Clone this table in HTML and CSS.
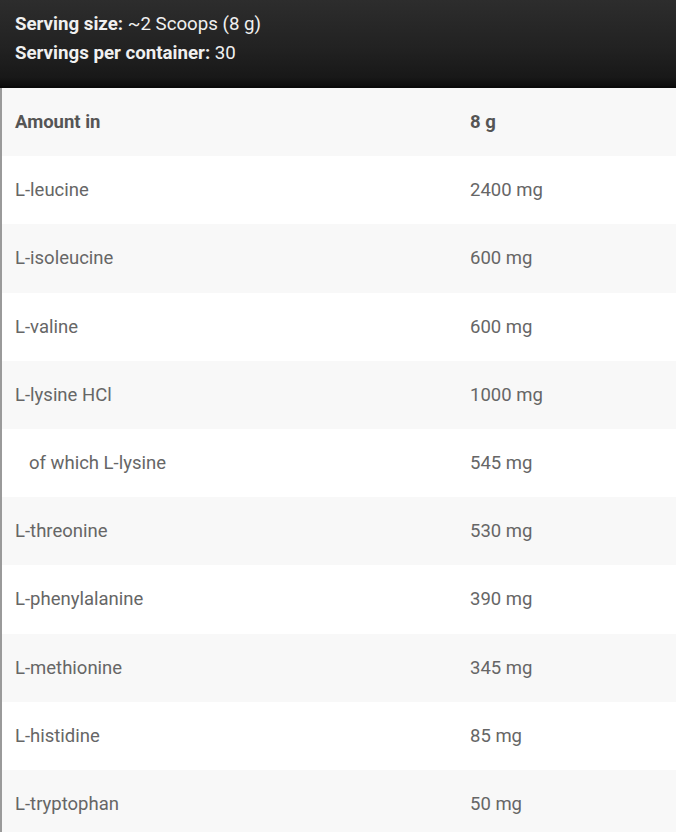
FILE: index.html
```html
<!DOCTYPE html>
<html>
<head>
<meta charset="utf-8">
<link rel="stylesheet" href="styles.css">
</head>
<body>
<div class="panel">
  <div class="head">
    <div class="line"><b>Serving size:</b> ~2 Scoops (8 g)</div>
    <div class="line"><b>Servings per container:</b> 30</div>
  </div>
  <div class="facts">
    <div class="row th"><span class="name">Amount in</span><span class="val">8 g</span></div>
    <div class="row"><span class="name">L-leucine</span><span class="val">2400 mg</span></div>
    <div class="row"><span class="name">L-isoleucine</span><span class="val">600 mg</span></div>
    <div class="row"><span class="name">L-valine</span><span class="val">600 mg</span></div>
    <div class="row"><span class="name">L-lysine HCl</span><span class="val">1000 mg</span></div>
    <div class="row"><span class="name sub">of which L-lysine</span><span class="val">545 mg</span></div>
    <div class="row"><span class="name">L-threonine</span><span class="val">530 mg</span></div>
    <div class="row"><span class="name">L-phenylalanine</span><span class="val">390 mg</span></div>
    <div class="row"><span class="name">L-methionine</span><span class="val">345 mg</span></div>
    <div class="row"><span class="name">L-histidine</span><span class="val">85 mg</span></div>
    <div class="row"><span class="name">L-tryptophan</span><span class="val">50 mg</span></div>
  </div>
</div>
</body>
</html>
```
FILE: styles.css
```css
html, body {
  margin: 0;
  padding: 0;
  background: #ffffff;
}
body {
  font-family: Roboto, "Liberation Sans", Arial, sans-serif;
  width: 676px;
  height: 832px;
  overflow: hidden;
}
.panel {
  width: 676px;
}
.head {
  height: 88px;
  box-sizing: border-box;
  padding: 10px 15px 0 15px;
  background: linear-gradient(to bottom, #2d2d2d 0%, #222222 55%, #181818 90%, #0e0e0e 100%);
  border-bottom: 2px solid #0a0a0a;
  color: #f0f0f0;
  font-size: 18.7px;
}
.head .line {
  height: 29px;
  line-height: 29px;
}
.head b {
  font-weight: 700;
}
.facts {
  border-left: 2px solid #9a9a9a;
  color: #666666;
  font-size: 18.5px;
}
.row {
  display: grid;
  grid-template-columns: 468px 1fr;
  align-items: center;
  height: 68.2px;
}
.row:nth-child(odd) {
  background: #f8f8f8;
}
.name {
  padding-left: 13px;
}
.name.sub {
  padding-left: 27px;
}
.row.th {
  font-weight: 700;
  color: #555555;
}
```
